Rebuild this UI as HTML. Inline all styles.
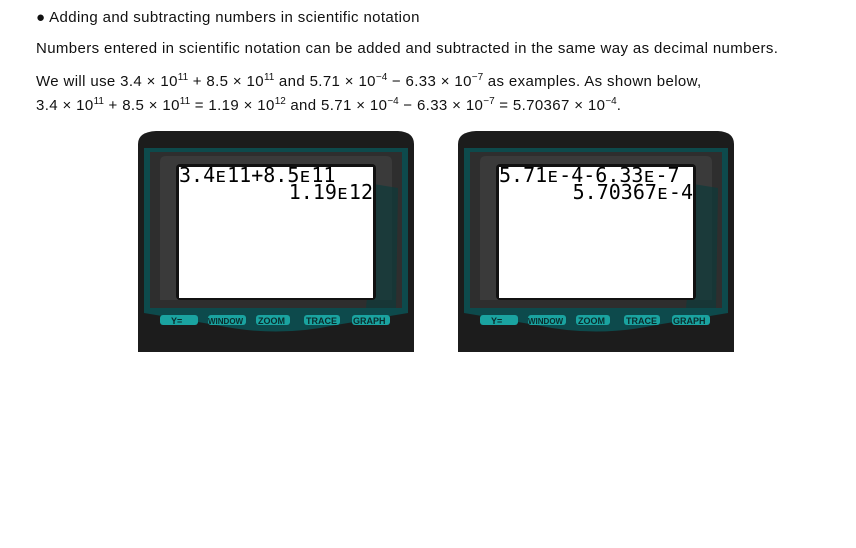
<!DOCTYPE html>
<html><head><style>
body{margin:0;background:#fff;width:856px;height:548px;overflow:hidden;font-family:"Liberation Sans","DejaVu Sans",sans-serif;color:#111;font-size:15px;letter-spacing:0.37px;position:relative}
.t{position:absolute;white-space:nowrap}
sup{font-size:10px;vertical-align:6px;line-height:0;letter-spacing:0}
.calc{position:absolute;top:128px;width:280px;height:224px;letter-spacing:0}
.scr{font-family:"DejaVu Sans Mono","Liberation Mono",monospace;font-size:20px;line-height:17px;color:#000;position:absolute;left:43px;top:39px;width:194px;height:131px;background:#fff}
</style></head><body>
<div class="t" style="left:36px;top:9px">● Adding and subtracting numbers in scientific notation</div>
<div class="t" style="left:36px;top:40px">Numbers entered in scientific notation can be added and subtracted in the same way as decimal numbers.</div>
<div class="t" style="left:36px;top:73px">We will use 3.4 × 10<sup>11</sup> + 8.5 × 10<sup>11</sup> and 5.71 × 10<sup>−4</sup> − 6.33 × 10<sup>−7</sup> as examples. As shown below,</div>
<div class="t" style="left:36px;top:97px">3.4 × 10<sup>11</sup> + 8.5 × 10<sup>11</sup> = 1.19 × 10<sup>12</sup> and 5.71 × 10<sup>−4</sup> − 6.33 × 10<sup>−7</sup> = 5.70367 × 10<sup>−4</sup>.</div>

<div class="calc" style="left:136px">
<svg width="280" height="224" style="position:absolute;left:0;top:0">
<path d="M2 16 Q2 4 20 3 L262 3 Q278 4 278 16 L278 224 L2 224 Z" fill="#1c1c1c"/>
<path d="M8 20 L272 20 L272 185 L200 197 Q140 210 80 197 L8 185 Z" fill="#0d4a4c"/>
<path d="M14 24 L266 24 L266 180 L14 180 Z" fill="#2e2e2e"/>
<path d="M30 28 L250 28 Q256 28 256 34 L256 172 L24 172 L24 34 Q24 28 30 28Z" fill="#3a3a3a"/>
<path d="M200 50 Q240 90 230 180 L260 180 L262 60Z" fill="#0e3a3b" opacity=".7"/>
<rect x="40" y="36" width="200" height="136" rx="4" fill="#111"/>
<g font-family="Liberation Sans,sans-serif" font-size="9" font-weight="bold" fill="#0b2b2b">
<rect x="24" y="187" width="38" height="10" rx="3" fill="#1aa3a0"/><text x="35" y="196">Y=</text>
<rect x="72" y="187" width="38" height="10" rx="3" fill="#1aa3a0"/><text x="72" y="196" font-size="8">WINDOW</text>
<rect x="120" y="187" width="34" height="10" rx="3" fill="#1aa3a0"/><text x="122" y="196">ZOOM</text>
<rect x="168" y="187" width="36" height="10" rx="3" fill="#1aa3a0"/><text x="170" y="196">TRACE</text>
<rect x="216" y="187" width="38" height="10" rx="3" fill="#1aa3a0"/><text x="217" y="196">GRAPH</text>
</g>
</svg>
<div class="scr"><div>3.4ᴇ11+8.5ᴇ11</div><div style="text-align:right">1.19ᴇ12</div></div>
</div>

<div class="calc" style="left:456px">
<svg width="280" height="224" style="position:absolute;left:0;top:0">
<path d="M2 16 Q2 4 20 3 L262 3 Q278 4 278 16 L278 224 L2 224 Z" fill="#1c1c1c"/>
<path d="M8 20 L272 20 L272 185 L200 197 Q140 210 80 197 L8 185 Z" fill="#0d4a4c"/>
<path d="M14 24 L266 24 L266 180 L14 180 Z" fill="#2e2e2e"/>
<path d="M30 28 L250 28 Q256 28 256 34 L256 172 L24 172 L24 34 Q24 28 30 28Z" fill="#3a3a3a"/>
<path d="M200 50 Q240 90 230 180 L260 180 L262 60Z" fill="#0e3a3b" opacity=".7"/>
<rect x="40" y="36" width="200" height="136" rx="4" fill="#111"/>
<g font-family="Liberation Sans,sans-serif" font-size="9" font-weight="bold" fill="#0b2b2b">
<rect x="24" y="187" width="38" height="10" rx="3" fill="#1aa3a0"/><text x="35" y="196">Y=</text>
<rect x="72" y="187" width="38" height="10" rx="3" fill="#1aa3a0"/><text x="72" y="196" font-size="8">WINDOW</text>
<rect x="120" y="187" width="34" height="10" rx="3" fill="#1aa3a0"/><text x="122" y="196">ZOOM</text>
<rect x="168" y="187" width="36" height="10" rx="3" fill="#1aa3a0"/><text x="170" y="196">TRACE</text>
<rect x="216" y="187" width="38" height="10" rx="3" fill="#1aa3a0"/><text x="217" y="196">GRAPH</text>
</g>
</svg>
<div class="scr"><div>5.71ᴇ-4-6.33ᴇ-7</div><div style="text-align:right">5.70367ᴇ-4</div></div>
</div>
</body></html>
